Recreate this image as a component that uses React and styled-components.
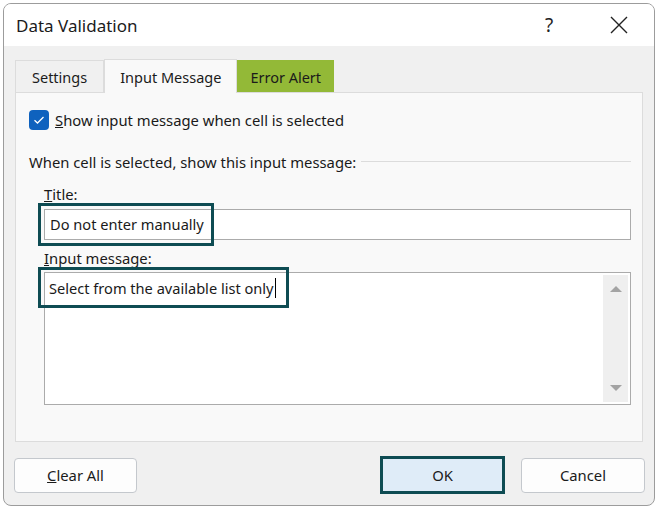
import React from "react";
import styled, { createGlobalStyle } from "styled-components";

const GlobalStyle = createGlobalStyle`
  body {
    margin: 0;
    background: #ffffff;
    font-family: "Noto Sans", "Open Sans", sans-serif;
    color: #1a1a1a;
  }
`;

const Window = styled.div`
  box-sizing: border-box;
  width: 652px;
  height: 503px;
  margin: 3px 0 0 3px;
  border: 1px solid #9c9c9c;
  border-radius: 8px;
  overflow: hidden;
  background: #f0f0f0;
  display: flex;
  flex-direction: column;
`;

const TitleBar = styled.div`
  height: 42px;
  background: #ffffff;
  display: flex;
  align-items: center;
  padding: 0 0 0 12px;
  font-size: 17px;
  color: #1b1b1b;
`;

const Caption = styled.span`
  flex: 1;
`;

const TitleButton = styled.span`
  width: 70px;
  display: flex;
  justify-content: center;
  align-items: center;
  font-size: 19px;
  color: #222;
`;

const Body = styled.div`
  flex: 1;
  padding: 12px 11px 0 11px;
  display: flex;
  flex-direction: column;
`;

const TabRow = styled.div`
  display: flex;
  align-items: flex-end;
  height: 34px;
`;

const Tab = styled.div`
  box-sizing: border-box;
  height: ${(p) => (p.$active ? 34 : 32)}px;
  padding: 0 ${(p) => p.$pad}px;
  display: flex;
  align-items: center;
  font-size: 14.5px;
  color: #1b1b1b;
  background: ${(p) => (p.$green ? "#93b937" : p.$active ? "#f9f9f9" : "#f0f0f0")};
  border: 1px solid ${(p) => (p.$green ? "#93b937" : "#dcdcdc")};
  border-bottom: none;
  margin-bottom: ${(p) => (p.$active ? -1 : 0)}px;
  position: relative;
  z-index: ${(p) => (p.$active ? 1 : 0)};
`;

const Panel = styled.div`
  box-sizing: border-box;
  height: 350px;
  background: #f9f9f9;
  border: 1px solid #dcdcdc;
  padding: 17px 11px 0 13px;
  display: flex;
  flex-direction: column;
  font-size: 14.8px;
`;

const CheckRow = styled.label`
  display: flex;
  align-items: center;
  gap: 6px;
  height: 20px;
`;

const CheckBox = styled.span`
  width: 20px;
  height: 20px;
  border-radius: 4px;
  background: #0f62be;
  display: flex;
  align-items: center;
  justify-content: center;
`;

const Heading = styled.div`
  margin-top: 22px;
  height: 20px;
  display: flex;
  align-items: center;
  gap: 5px;
  &::after {
    content: "";
    flex: 1;
    height: 1px;
    background: #dcdcdc;
    margin-top: -1px;
  }
`;

const FieldLabel = styled.div`
  margin: ${(p) => p.$top}px 0 0 15px;
  height: 20px;
  display: flex;
  align-items: center;
`;

const Field = styled.div`
  position: relative;
  box-sizing: border-box;
  margin: ${(p) => p.$top}px 0 0 15px;
  height: ${(p) => p.$height}px;
  background: #ffffff;
  border: 1px solid #ababab;
  padding: ${(p) => (p.$multi ? "3px 0 0 4px" : "0 0 2px 5px")};
  display: flex;
  align-items: ${(p) => (p.$multi ? "flex-start" : "center")};
  font-size: 14.6px;
`;

const FieldText = styled.span`
  display: flex;
  align-items: center;
  height: 24px;
  white-space: nowrap;
`;

const Caret = styled.span`
  display: inline-block;
  width: 1px;
  height: 20px;
  background: #000;
  margin-left: 1px;
`;

const Highlight = styled.span`
  position: absolute;
  box-sizing: border-box;
  left: -7px;
  top: ${(p) => p.$top}px;
  width: ${(p) => p.$width}px;
  height: ${(p) => p.$height}px;
  border: 3px solid #0e4c53;
  pointer-events: none;
`;

const ScrollBar = styled.div`
  position: absolute;
  right: 2px;
  top: 2px;
  bottom: 2px;
  width: 25px;
  background: #efefef;
  display: flex;
  flex-direction: column;
  justify-content: space-between;
  align-items: center;
  padding: 10px 0;
  box-sizing: border-box;
`;

const Footer = styled.div`
  display: flex;
  align-items: center;
  height: 38px;
  margin: 14px -2px 0 -1px;
`;

const Button = styled.button`
  box-sizing: border-box;
  width: ${(p) => p.$width}px;
  height: ${(p) => (p.$primary ? 38 : 35)}px;
  margin-left: ${(p) => p.$gap || 0}px;
  border-radius: ${(p) => (p.$primary ? 0 : 4)}px;
  border: ${(p) => (p.$primary ? "3px solid #0e4c53" : "1px solid #c4c8cd")};
  background: ${(p) => (p.$primary ? "#dfecf8" : "#fdfdfd")};
  font-family: inherit;
  font-size: 14.8px;
  color: #1b1b1b;
  padding: 0;
`;

const Spacer = styled.div`
  flex: 1;
`;

const Arrow = ({ down }) => (
  <svg width="12" height="8" viewBox="0 0 12 8">
    <path d={down ? "M0 1h12L6 7z" : "M0 7h12L6 1z"} fill="#a3a3a3" />
  </svg>
);

export default function App() {
  return (
    <>
      <GlobalStyle />
      <Window>
        <TitleBar>
          <Caption>Data Validation</Caption>
          <TitleButton>?</TitleButton>
          <TitleButton>
            <svg width="18" height="18" viewBox="0 0 18 18">
              <path d="M1 1L17 17M17 1L1 17" stroke="#222" strokeWidth="1.4" />
            </svg>
          </TitleButton>
        </TitleBar>
        <Body>
          <TabRow>
            <Tab $pad={16}>Settings</Tab>
            <Tab $pad={15} $active>Input Message</Tab>
            <Tab $pad={12} $green>Error Alert</Tab>
          </TabRow>
          <Panel>
            <CheckRow>
              <CheckBox>
                <svg width="12" height="10" viewBox="0 0 12 10">
                  <path d="M1.5 5.2L4.5 8L10.5 2" fill="none" stroke="#fff" strokeWidth="1.3" />
                </svg>
              </CheckBox>
              <span>
                <u>S</u>how input message when cell is selected
              </span>
            </CheckRow>
            <Heading>When cell is selected, show this input message:</Heading>
            <FieldLabel $top={12}>
              <span>
                <u>T</u>itle:
              </span>
            </FieldLabel>
            <Field $top={5} $height={31}>
              <FieldText>Do not enter manually</FieldText>
              <Highlight $top={-7} $width={176} $height={43} />
            </Field>
            <FieldLabel $top={8}>
              <span>
                <u>I</u>nput message:
              </span>
            </FieldLabel>
            <Field $top={4} $height={133} $multi>
              <FieldText>
                Select from the available list only
                <Caret />
              </FieldText>
              <Highlight $top={-6} $width={251} $height={41} />
              <ScrollBar>
                <Arrow />
                <Arrow down />
              </ScrollBar>
            </Field>
          </Panel>
          <Footer>
            <Button $width={123}>
              <u>C</u>lear All
            </Button>
            <Spacer />
            <Button $width={125} $primary>OK</Button>
            <Button $width={124} $gap={16}>Cancel</Button>
          </Footer>
        </Body>
      </Window>
    </>
  );
}
